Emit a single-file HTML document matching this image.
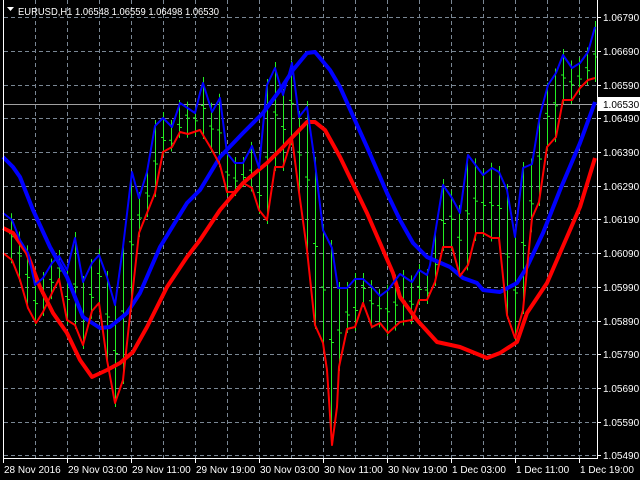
<!DOCTYPE html>
<html><head><meta charset="utf-8"><style>
html,body{margin:0;padding:0;background:#000;width:640px;height:480px;overflow:hidden}
svg{display:block}
text{font-family:"Liberation Sans",sans-serif;font-size:10px;fill:#fff}
</style></head><body>
<svg id="s" width="640" height="480" xmlns="http://www.w3.org/2000/svg">
<g id="grid" stroke="#7a8794" stroke-width="1" stroke-dasharray="4,3"></g>
<line x1="3" y1="104.5" x2="597" y2="104.5" stroke="#a0a0a0"/>
<g id="bars" stroke="#22ee22" stroke-width="1"></g>
<polyline fill="none" stroke="#0000ff" stroke-width="4" stroke-linejoin="round" points="3,157 13,167 20,177 33,210 50,247 67,277 83,317 100,328 110,327 127,313 140,293 160,247 187,203 200,190 220,157 243,133 263,113 280,90 293,70 307,53 315,52 330,70 340,87 367,147 387,193 400,220 413,243 427,257 450,267 463,278 477,283 483,290 500,292 517,283 527,267 543,233 560,190 580,143 595,102"/>
<polyline fill="none" stroke="#ff0000" stroke-width="4" stroke-linejoin="round" points="3,228 13,233 27,253 40,287 53,313 67,333 80,360 92,377 107,370 120,363 133,352 147,327 167,287 187,257 200,240 220,210 243,183 267,163 283,147 307,122 315,122 325,130 340,157 367,213 393,273 400,297 417,320 437,342 460,347 487,358 500,353 517,342 527,313 547,283 560,253 580,207 595,158"/>
<polyline id="tb" fill="none" stroke="#0000ff" stroke-width="2" stroke-linejoin="round" points="3,213 12,220 20,240 28,253 35,285 43,278 52,263 59,256 67,270 75,238 83,282 92,263 99,255 107,277 115,305 123,247 132,172 139,198 147,172 155,126 163,118 172,127 180,103 195,113 200,93 203,83 212,112 220,98 227,153 235,163 243,163 252,146 259,168 267,85 275,68 283,95 292,63 299,117 307,107 315,163 323,230 332,248 338,288 347,288 355,279 363,279 372,287 380,296 388,290 400,274 412,282 419,270 427,275 430,265 443,185 452,198 460,213 468,155 483,175 492,168 499,172 507,190 515,237 523,168 532,164 540,115 548,85 556,73 563,55 572,68 580,63 588,52 595,27"/>
<polyline id="tr" fill="none" stroke="#ff0000" stroke-width="2" stroke-linejoin="round" points="3,253 12,260 20,280 28,308 36,323 43,312 52,293 59,279 67,320 75,325 83,345 92,311 99,303 107,360 115,403 123,380 132,297 139,233 147,213 155,193 163,152 172,147 180,132 188,134 200,130 212,150 220,165 227,192 235,192 243,183 252,188 259,210 267,220 275,167 283,167 292,138 299,192 307,250 315,325 323,343 327,370 332,445 337,407 339,367 347,329 355,327 363,303 372,327 380,323 388,333 400,322 412,320 419,300 427,300 435,282 443,247 452,247 460,276 468,265 476,233 483,233 492,238 499,238 507,315 515,338 523,310 532,218 539,202 547,147 556,137 563,100 572,100 580,88 588,80 595,78"/>
<line x1="3.5" y1="0" x2="3.5" y2="458" stroke="#fff"/>
<line x1="3" y1="458.5" x2="598" y2="458.5" stroke="#fff"/>
<line x1="597.5" y1="0" x2="597.5" y2="459" stroke="#fff"/>
<g id="ax"></g>
<polygon points="7,7 14,7 10.5,11" fill="#fff"/>
<text x="18" y="15" style="font-size:10.5px" textLength="201" lengthAdjust="spacingAndGlyphs">EURUSD,H1  1.06548 1.06559 1.06498 1.06530</text>
<rect x="598" y="97" width="42" height="14" fill="#fff"/>
<text x="603" y="108" style="fill:#000">1.06530</text>
</svg>
<script>
var NS="http://www.w3.org/2000/svg",s=document.getElementById('s');
function el(p,t,a,txt){var e=document.createElementNS(NS,t);for(var k in a)e.setAttribute(k,a[k]);if(txt)e.textContent=txt;p.appendChild(e);return e;}
var g=document.getElementById('grid'),ax=document.getElementById('ax');
var ys=[17,51,85,118,152,186,219,253,287,321,354,388,422,455],pr=["1.06790","1.06690","1.06590","1.06490","1.06390","1.06290","1.06190","1.06090","1.05990","1.05890","1.05790","1.05690","1.05590","1.05490"];
ys.forEach(function(y,i){el(g,'line',{x1:4,y1:y+.5,x2:597,y2:y+.5});el(ax,'line',{x1:597,y1:y+.5,x2:601,y2:y+.5,stroke:'#fff'});el(ax,'text',{x:603,y:y+4},pr[i]);});
for(var x=35;x<597;x+=32)el(g,'line',{x1:x+.5,y1:0,x2:x+.5,y2:458});
var lb=["28 Nov 2016","29 Nov 03:00","29 Nov 11:00","29 Nov 19:00","30 Nov 03:00","30 Nov 11:00","30 Nov 19:00","1 Dec 03:00","1 Dec 11:00","1 Dec 19:00"];
lb.forEach(function(t,i){var x=3+64*i;el(ax,'line',{x1:x+.5,y1:458,x2:x+.5,y2:463,stroke:'#fff'});el(ax,'text',{x:x+1,y:473},t);});
function pts(id){return document.getElementById(id).getAttribute('points').trim().split(/\s+/).map(function(p){return p.split(',').map(Number);});}
function at(P,x){for(var i=1;i<P.length;i++)if(P[i][0]>=x){var a=P[i-1],b=P[i];return a[1]+(b[1]-a[1])*(x-a[0])/(b[0]-a[0]||1);}return P[P.length-1][1];}
var B=pts('tb'),R=pts('tr'),bg=document.getElementById('bars');
for(var x=11;x<596;x+=8){var b=at(B,x),r=at(R,x),hi=Math.min(b,r)-6,lo=Math.max(b,r)+4,c=(hi+lo)/2+((x*7)%11-5);
el(bg,'line',{x1:x+.5,y1:hi,x2:x+.5,y2:lo});el(bg,'line',{x1:x-2,y1:c+.5,x2:x,y2:c+.5});el(bg,'line',{x1:x+1,y1:c+3.5,x2:x+3,y2:c+3.5});}
</script>
</body></html>
